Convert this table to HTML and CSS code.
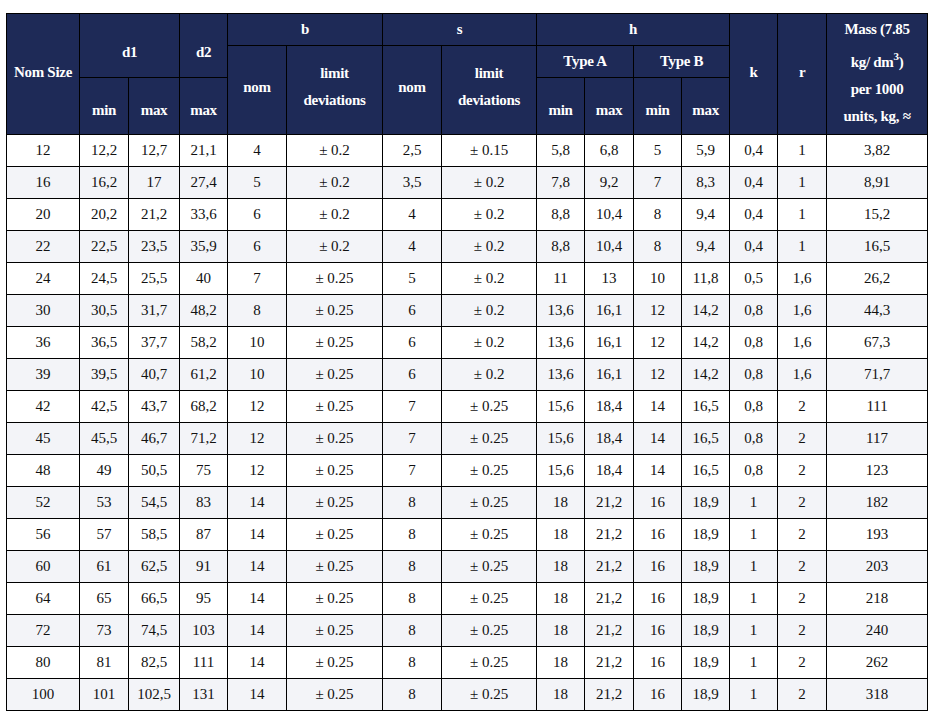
FILE: index.html
```html
<!DOCTYPE html>
<html>
<head>
<meta charset="utf-8">
<link rel="stylesheet" href="styles.css">
</head>
<body>
<table class="spec">
  <colgroup>
    <col class="c73"><col class="c49"><col class="c51"><col class="c48"><col class="c59"><col class="c96"><col class="c59"><col class="c95"><col class="c48"><col class="c49"><col class="c48"><col class="c48"><col class="c48"><col class="c49"><col class="c101">
  </colgroup>
  <thead>
    <tr class="h1">
      <th rowspan="3" class="mid">Nom Size</th>
      <th colspan="2" rowspan="2" class="low1">d1</th>
      <th rowspan="2" class="low1">d2</th>
      <th colspan="2">b</th>
      <th colspan="2">s</th>
      <th colspan="4">h</th>
      <th rowspan="3" class="mid">k</th>
      <th rowspan="3" class="mid">r</th>
      <th rowspan="3" class="mass">Mass (7.85<br>kg/ dm<sup>3</sup>)<br>per 1000<br>units, kg, ≈</th>
    </tr>
    <tr class="h2">
      <th rowspan="2" class="mid2">nom</th>
      <th rowspan="2" class="mid2">limit deviations</th>
      <th rowspan="2" class="mid2">nom</th>
      <th rowspan="2" class="mid2">limit deviations</th>
      <th colspan="2">Type A</th>
      <th colspan="2">Type B</th>
    </tr>
    <tr class="h3">
      <th class="low2">min</th>
      <th class="low2">max</th>
      <th class="low2">max</th>
      <th class="low2">min</th>
      <th class="low2">max</th>
      <th class="low2">min</th>
      <th class="low2">max</th>
    </tr>
  </thead>
  <tbody>
    <tr><td>12</td><td>12,2</td><td>12,7</td><td>21,1</td><td>4</td><td>± 0.2</td><td>2,5</td><td>± 0.15</td><td>5,8</td><td>6,8</td><td>5</td><td>5,9</td><td>0,4</td><td>1</td><td>3,82</td></tr>
    <tr><td>16</td><td>16,2</td><td>17</td><td>27,4</td><td>5</td><td>± 0.2</td><td>3,5</td><td>± 0.2</td><td>7,8</td><td>9,2</td><td>7</td><td>8,3</td><td>0,4</td><td>1</td><td>8,91</td></tr>
    <tr><td>20</td><td>20,2</td><td>21,2</td><td>33,6</td><td>6</td><td>± 0.2</td><td>4</td><td>± 0.2</td><td>8,8</td><td>10,4</td><td>8</td><td>9,4</td><td>0,4</td><td>1</td><td>15,2</td></tr>
    <tr><td>22</td><td>22,5</td><td>23,5</td><td>35,9</td><td>6</td><td>± 0.2</td><td>4</td><td>± 0.2</td><td>8,8</td><td>10,4</td><td>8</td><td>9,4</td><td>0,4</td><td>1</td><td>16,5</td></tr>
    <tr><td>24</td><td>24,5</td><td>25,5</td><td>40</td><td>7</td><td>± 0.25</td><td>5</td><td>± 0.2</td><td>11</td><td>13</td><td>10</td><td>11,8</td><td>0,5</td><td>1,6</td><td>26,2</td></tr>
    <tr><td>30</td><td>30,5</td><td>31,7</td><td>48,2</td><td>8</td><td>± 0.25</td><td>6</td><td>± 0.2</td><td>13,6</td><td>16,1</td><td>12</td><td>14,2</td><td>0,8</td><td>1,6</td><td>44,3</td></tr>
    <tr><td>36</td><td>36,5</td><td>37,7</td><td>58,2</td><td>10</td><td>± 0.25</td><td>6</td><td>± 0.2</td><td>13,6</td><td>16,1</td><td>12</td><td>14,2</td><td>0,8</td><td>1,6</td><td>67,3</td></tr>
    <tr><td>39</td><td>39,5</td><td>40,7</td><td>61,2</td><td>10</td><td>± 0.25</td><td>6</td><td>± 0.2</td><td>13,6</td><td>16,1</td><td>12</td><td>14,2</td><td>0,8</td><td>1,6</td><td>71,7</td></tr>
    <tr><td>42</td><td>42,5</td><td>43,7</td><td>68,2</td><td>12</td><td>± 0.25</td><td>7</td><td>± 0.25</td><td>15,6</td><td>18,4</td><td>14</td><td>16,5</td><td>0,8</td><td>2</td><td>111</td></tr>
    <tr><td>45</td><td>45,5</td><td>46,7</td><td>71,2</td><td>12</td><td>± 0.25</td><td>7</td><td>± 0.25</td><td>15,6</td><td>18,4</td><td>14</td><td>16,5</td><td>0,8</td><td>2</td><td>117</td></tr>
    <tr><td>48</td><td>49</td><td>50,5</td><td>75</td><td>12</td><td>± 0.25</td><td>7</td><td>± 0.25</td><td>15,6</td><td>18,4</td><td>14</td><td>16,5</td><td>0,8</td><td>2</td><td>123</td></tr>
    <tr><td>52</td><td>53</td><td>54,5</td><td>83</td><td>14</td><td>± 0.25</td><td>8</td><td>± 0.25</td><td>18</td><td>21,2</td><td>16</td><td>18,9</td><td>1</td><td>2</td><td>182</td></tr>
    <tr><td>56</td><td>57</td><td>58,5</td><td>87</td><td>14</td><td>± 0.25</td><td>8</td><td>± 0.25</td><td>18</td><td>21,2</td><td>16</td><td>18,9</td><td>1</td><td>2</td><td>193</td></tr>
    <tr><td>60</td><td>61</td><td>62,5</td><td>91</td><td>14</td><td>± 0.25</td><td>8</td><td>± 0.25</td><td>18</td><td>21,2</td><td>16</td><td>18,9</td><td>1</td><td>2</td><td>203</td></tr>
    <tr><td>64</td><td>65</td><td>66,5</td><td>95</td><td>14</td><td>± 0.25</td><td>8</td><td>± 0.25</td><td>18</td><td>21,2</td><td>16</td><td>18,9</td><td>1</td><td>2</td><td>218</td></tr>
    <tr><td>72</td><td>73</td><td>74,5</td><td>103</td><td>14</td><td>± 0.25</td><td>8</td><td>± 0.25</td><td>18</td><td>21,2</td><td>16</td><td>18,9</td><td>1</td><td>2</td><td>240</td></tr>
    <tr><td>80</td><td>81</td><td>82,5</td><td>111</td><td>14</td><td>± 0.25</td><td>8</td><td>± 0.25</td><td>18</td><td>21,2</td><td>16</td><td>18,9</td><td>1</td><td>2</td><td>262</td></tr>
    <tr><td>100</td><td>101</td><td>102,5</td><td>131</td><td>14</td><td>± 0.25</td><td>8</td><td>± 0.25</td><td>18</td><td>21,2</td><td>16</td><td>18,9</td><td>1</td><td>2</td><td>318</td></tr>
  </tbody>
</table>
</body>
</html>
```
FILE: styles.css
```css
html, body {
  margin: 0;
  padding: 0;
  background: #ffffff;
}
body {
  padding: 13px 0 0 6px;
  font-family: "Liberation Serif", "DejaVu Serif", serif;
  color: #111111;
}
.spec {
  border-collapse: collapse;
  table-layout: fixed;
  width: 922px;
  font-size: 15px;
  font-family: "Liberation Serif", "DejaVu Serif", serif;
}
.c73 { width: 73px; }
.c49 { width: 49px; }
.c51 { width: 51px; }
.c48 { width: 48px; }
.c59 { width: 59px; }
.c96 { width: 96px; }
.c95 { width: 95px; }
.c101 { width: 101px; }

.spec th,
.spec td {
  border: 1px solid #000000;
  text-align: center;
  vertical-align: middle;
  padding: 0 4px;
  font-family: "Liberation Serif", "DejaVu Serif", serif;
}
.spec th {
  background: #1e2a57;
  color: #ffffff;
  font-weight: bold;
  line-height: 27px;
  letter-spacing: -0.3px;
}
.h1 { height: 32px; }
.h2 { height: 32px; }
.h3 { height: 57px; }
.spec th.mid { padding-bottom: 4px; }
.spec th.mid2 { padding-bottom: 6px; }
.spec th.low1 { padding-top: 14px; }
.spec th.low2 { padding-top: 9px; }
.spec th.mass { line-height: 27px; padding: 0 2px 2px; }
.spec th sup {
  font-size: 11px;
  line-height: 27px;
  vertical-align: 7px;
}
.spec td {
  height: 29px;
  line-height: 18px;
  padding-bottom: 2px;
  padding-top: 0;
}
.spec tbody tr:nth-child(even) td {
  background: #f3f4f8;
}
```
